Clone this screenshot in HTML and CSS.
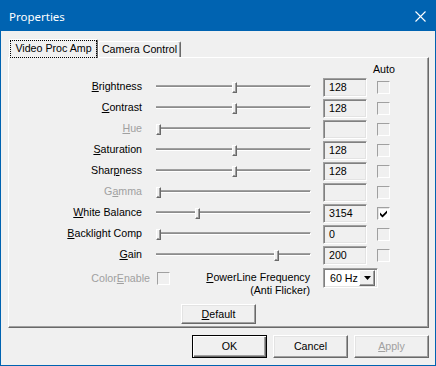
FILE: index.html
```html
<!DOCTYPE html>
<html>
<head>
	<link rel="stylesheet" href="styles.css">
</head>
<body>
	<div class="window">
		<div class="titlebar">
			<span class="title">Properties</span>
			<svg class="close" width="11" height="11" viewBox="0 0 11 11">
				<path d="M0.5 0.5 L10.5 10.5 M10.5 0.5 L0.5 10.5" stroke="#fff" stroke-width="1.1" fill="none"/>
			</svg>
		</div>

		<div class="client">
			<div class="tabs">
				<div class="tab active"><span class="focus">Video Proc Amp</span></div>
				<div class="tab">Camera Control</div>
			</div>

			<div class="page">
				<div class="auto-head">Auto</div>

				<div class="props">
					<div class="row">
						<div class="name"><u>B</u>rightness</div>
						<div class="slider"><div class="track"></div><div class="thumb" style="--v: .507"></div></div>
						<div class="edit">128</div>
						<span class="check"></span>
					</div>
					<div class="row">
						<div class="name"><u>C</u>ontrast</div>
						<div class="slider"><div class="track"></div><div class="thumb" style="--v: .507"></div></div>
						<div class="edit">128</div>
						<span class="check"></span>
					</div>
					<div class="row disabled">
						<div class="name"><u>H</u>ue</div>
						<div class="slider"><div class="track"></div><div class="thumb" style="--v: 0"></div></div>
						<div class="edit"></div>
						<span class="check"></span>
					</div>
					<div class="row">
						<div class="name"><u>S</u>aturation</div>
						<div class="slider"><div class="track"></div><div class="thumb" style="--v: .507"></div></div>
						<div class="edit">128</div>
						<span class="check"></span>
					</div>
					<div class="row">
						<div class="name">Shar<u>p</u>ness</div>
						<div class="slider"><div class="track"></div><div class="thumb" style="--v: .507"></div></div>
						<div class="edit">128</div>
						<span class="check"></span>
					</div>
					<div class="row disabled">
						<div class="name">G<u>a</u>mma</div>
						<div class="slider"><div class="track"></div><div class="thumb" style="--v: 0"></div></div>
						<div class="edit"></div>
						<span class="check"></span>
					</div>
					<div class="row">
						<div class="name"><u>W</u>hite Balance</div>
						<div class="slider"><div class="track"></div><div class="thumb" style="--v: .26"></div></div>
						<div class="edit">3154</div>
						<span class="check checked">
							<svg width="7" height="8" viewBox="0 0 7 8"><path d="M0 2.5 L2.5 5 L7 0.5 L7 3 L2.5 7.5 L0 5 Z" fill="#000"/></svg>
						</span>
					</div>
					<div class="row">
						<div class="name"><u>B</u>acklight Comp</div>
						<div class="slider"><div class="track"></div><div class="thumb" style="--v: 0"></div></div>
						<div class="edit">0</div>
						<span class="check"></span>
					</div>
					<div class="row">
						<div class="name"><u>G</u>ain</div>
						<div class="slider"><div class="track"></div><div class="thumb" style="--v: .787"></div></div>
						<div class="edit">200</div>
						<span class="check"></span>
					</div>
				</div>

				<div class="extra">
					<div class="name wide disabled">Color<u>E</u>nable</div>
					<span class="check"></span>
					<div class="power"><u>P</u>owerLine Frequency<br>(Anti Flicker)</div>
					<div class="combo">
						<span class="value">60 Hz</span>
						<span class="drop"><svg width="7" height="4" viewBox="0 0 7 4"><path d="M0 0 L7 0 L3.5 4 Z" fill="#000"/></svg></span>
					</div>
				</div>

				<div class="default-wrap">
					<button class="btn"><u>D</u>efault</button>
				</div>
			</div>

			<div class="buttons">
				<button class="btn primary">OK</button>
				<button class="btn">Cancel</button>
				<button class="btn disabled"><u>A</u>pply</button>
			</div>
		</div>
	</div>
</body>
</html>
```

FILE: styles.css
```css
*					{ box-sizing: border-box; }
body				{ margin: 0; padding: 0; font: 8pt/13px "Liberation Sans", Arial, sans-serif; color: #000; }
u					{ text-decoration: underline; text-underline-offset: 1px; }

.window				{ width: 436px; height: 366px; border: 1px solid #0063b1; background: #f0f0f0;
					  display: flex; flex-direction: column; }
.titlebar			{ height: 30px; background: #0063b1; display: flex; align-items: center; padding-left: 8px; }
.title				{ font: 11.5px "Noto Sans", sans-serif; color: #fff; }
.close				{ margin-left: auto; margin-right: 9px; }

.client				{ padding: 8px 6px 0 7px; }

/* tab strip */
.tabs				{ display: flex; align-items: flex-end; height: 18px; padding-left: 1px; }
.tab				{ position: relative; height: 16px; width: 83px; text-align: center; line-height: 15px;
					  border: 1px solid #fff; border-right-color: #696969; border-bottom: 0;
					  border-radius: 2px 2px 0 0; box-shadow: inset -1px 0 #a0a0a0; background: #f0f0f0; }
.tab.active			{ height: 19px; width: 89px; margin-bottom: -1px; z-index: 1; padding: 1px 1px 0 1px; line-height: 15px; }
.tab .focus			{ display: block; height: 16px; outline: 1px dotted #000; outline-offset: 0; }

.page				{ height: 271px; padding-top: 4px; border: 1px solid; border-color: #fff #696969 #696969 #fff;
					  box-shadow: inset -1px -1px #a0a0a0; }
.auto-head			{ height: 14px; line-height: 14px; padding-left: 364px; }

/* property rows */
.row				{ display: flex; height: 21px; align-items: center; }
.name				{ width: 133px; flex: none; text-align: right; }
.disabled,
.row.disabled .name	{ color: #a0a0a0; }
.slider				{ position: relative; display: flex; align-items: center; width: 155px; height: 21px; margin-left: 14px; }
.track				{ flex: 1; height: 3px; border-top: 1px solid #a0a0a0; border-bottom: 1px solid #fff;
					  border-right: 1px solid #fff; background: #8c8c8c; }
.thumb				{ position: absolute; top: 6px; left: calc((100% - 5px) * var(--v)); width: 5px; height: 11px;
					  border: 1px solid; border-color: #fff #696969 #696969 #fff; background: #f0f0f0;
					  box-shadow: inset -1px -1px #a0a0a0; }
.edit				{ width: 44px; height: 19px; margin-left: 12px; align-self: flex-end; padding-left: 5px; line-height: 17px;
					  border: 1px solid; border-color: #a0a0a0 #fff #fff #a0a0a0;
					  box-shadow: inset 1px 1px #808080, inset -1px -1px #e3e3e3; }
.check				{ display: flex; align-items: center; justify-content: center; flex: none;
					  width: 13px; height: 13px; margin-left: 10px; align-self: flex-end; margin-bottom: 3px;
					  border: 1px solid; border-color: #a0a0a0 #fff #fff #a0a0a0; background: #f0f0f0; }
.check.checked		{ background: #fff; box-shadow: inset 1px 1px #e3e3e3; }

/* colour enable / powerline row */
.extra				{ display: flex; align-items: flex-start; height: 30px; margin-top: 3px; }
.extra .name.wide	{ width: 141px; margin-top: 4px; }
.extra .check		{ margin: 4px 0 0 7px; align-self: flex-start; }
.power				{ width: 140px; text-align: right; line-height: 12.5px; margin-top: 3px; }
.combo				{ display: flex; align-items: center; width: 55px; height: 20px; margin-left: 13px; padding: 2px;
					  border: 1px solid; border-color: #a0a0a0 #fff #fff #a0a0a0;
					  box-shadow: inset 1px 1px #808080, inset -1px -1px #e3e3e3; background: #fff; }
.combo .value		{ flex: 1; padding-left: 4px; }
.combo .drop		{ display: flex; align-items: center; justify-content: center; width: 16px; height: 16px;
					  border: 1px solid; border-color: #fff #696969 #696969 #fff; background: #f0f0f0;
					  box-shadow: inset -1px -1px #a0a0a0; }

/* buttons */
.default-wrap		{ display: flex; justify-content: center; margin-top: 6px; }
.default-wrap .btn	{ height: 20px; }
.btn				{ width: 75px; height: 23px; padding: 0; font: inherit; color: #000; background: #f0f0f0;
					  border: 1px solid; border-color: #fff #696969 #696969 #fff;
					  box-shadow: inset -1px -1px #a0a0a0, inset 1px 1px #e3e3e3; }
.btn.primary		{ border-color: #000;
					  box-shadow: inset 1px 1px #fff, inset -1px -1px #696969, inset -2px -2px #a0a0a0; }
.btn.disabled		{ color: #a0a0a0; }
.buttons			{ display: flex; justify-content: flex-end; gap: 6px; margin-top: 7px; }
```
